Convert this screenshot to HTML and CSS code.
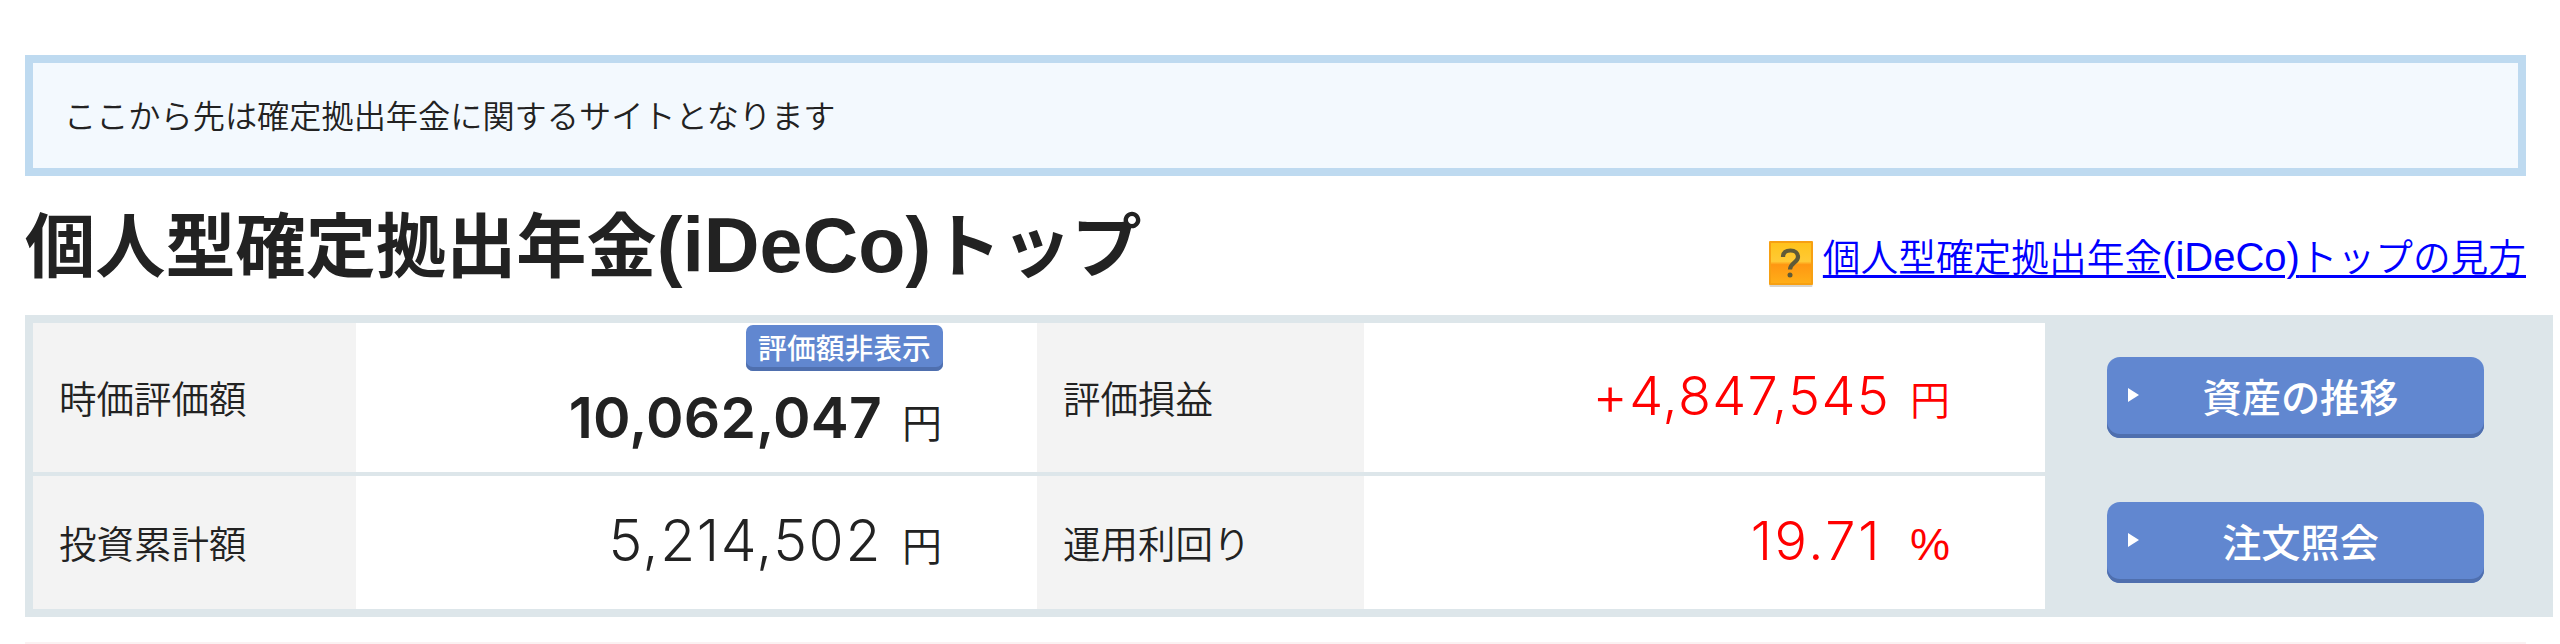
FILE: index.html
```
<!DOCTYPE html>
<html lang="ja">

<head>
    <meta charset="UTF-8">
    <meta name="viewport" content="width=device-width, initial-scale=1.0">
    <title>個人型確定拠出年金(iDeCo)トップ</title>
    <link rel="stylesheet" href="styles.css">
</head>

<body>
    <div class="notice">ここから先は確定拠出年金に関するサイトとなります</div>

    <div class="page-header">
        <h1>個人型確定拠出年金<span class="latin">(iDeCo)</span>トップ</h1>
        <div class="help">
            <svg class="help-icon" width="44" height="46" viewBox="0 0 44 46">
                <defs>
                    <linearGradient id="orange" x1="0" y1="0" x2="0" y2="1">
                        <stop offset="0" stop-color="#ffc21c" />
                        <stop offset="0.46" stop-color="#ffca35" />
                        <stop offset="0.54" stop-color="#ff9712" />
                        <stop offset="1" stop-color="#ffae18" />
                    </linearGradient>
                </defs>
                <rect x="0.5" y="2" width="43" height="44" rx="1" fill="#d8d4cc" />
                <rect x="0" y="0" width="44" height="44" rx="1" fill="#f7a012" />
                <rect x="2" y="2" width="40" height="40" fill="url(#orange)" />
                <path d="M14 16 C14 11 17 9.500 21.500 9.500 C26 9.500 29 12 29 16 C29 21.500 21 22 21 28.500" fill="none" stroke="#5f5a38" stroke-width="4.200" />
                <circle cx="21" cy="34" r="2.500" fill="#5f5a38" />
            </svg>
            <a href="#">個人型確定拠出年金<span class="latin">(iDeCo)</span>トップの見方</a>
        </div>
    </div>

    <table class="summary">
        <tr class="row-top">
            <th>時価評価額</th>
            <td class="market-value">
                <button class="btn-small">評価額非表示</button>
                <div class="amount strong"><span class="num">10,062,047</span><span class="unit">円</span></div>
            </td>
            <th>評価損益</th>
            <td>
                <div class="amount plus"><span class="num">+4,847,545</span><span class="unit">円</span></div>
            </td>
            <td class="action"><button class="btn">資産の推移</button></td>
        </tr>
        <tr class="row-bottom">
            <th>投資累計額</th>
            <td>
                <div class="amount"><span class="num">5,214,502</span><span class="unit">円</span></div>
            </td>
            <th>運用利回り</th>
            <td>
                <div class="amount plus rate"><span class="num">19.71</span><span class="unit">%</span></div>
            </td>
            <td class="action"><button class="btn">注文照会</button></td>
        </tr>
    </table>

    <hr>
</body>

</html>
```
FILE: styles.css
```
:root {
    --text-color: #222;
    --frame-color: #dde6ea;
    --btn-bg: #6187d0;
    --btn-edge: #4f6fae;
}

* {
    box-sizing: border-box;
}

body {
    margin: 0;
    padding: 55px 0 0 25px;
    height: 644px;
    overflow: hidden;
    background-color: #fff;
    color: var(--text-color);
    font-family: "Noto Sans CJK JP", sans-serif;
}

.notice {
    width: 2501px;
    height: 121px;
    padding: 0 31px;
    border: 8px solid #bedaf0;
    background-color: #f3f9fe;
    font-size: 32.2px;
    font-weight: 350;
    line-height: 102px;
}

/* Heading and help link */
.page-header {
    display: flex;
    justify-content: space-between;
    width: 2501px;
    height: 139px;
}

h1 {
    margin: 0;
    font-size: 70.2px;
    font-weight: 700;
    line-height: 132px;
    white-space: nowrap;
}

.latin {
    font-family: "Liberation Sans", sans-serif;
    font-size: 1.1em;
    line-height: 1;
}

.help {
    display: flex;
    padding-top: 65px;
    font-size: 37.7px;
    line-height: 28px;
    white-space: nowrap;
}

.help-icon {
    margin-right: 10px;
}

.help a {
    color: #00f;
    font-weight: 350;
    text-decoration-thickness: 3px;
    text-underline-offset: 4px;
}

.help .latin {
    font-size: 40px;
    line-height: 28px;
}

/* Summary table */
.summary {
    width: 2528px;
    border: 8px solid var(--frame-color);
    border-collapse: separate;
    border-spacing: 0;
    table-layout: fixed;
    background-color: var(--frame-color);
}

th,
td {
    padding: 0;
}

th {
    width: 327px;
    padding: 0 0 2px 26px;
    background-color: #f3f3f3;
    font-size: 37.5px;
    font-weight: 350;
    line-height: 50px;
    text-align: left;
}

th:first-child {
    width: 323px;
}

td {
    width: 681px;
    padding: 0 96px 3px 0;
    background-color: #fff;
    text-align: right;
}

.row-top > * {
    height: 153px;
    border-bottom: 4px solid var(--frame-color);
}

.row-bottom > * {
    height: 133px;
}

.market-value {
    padding-top: 2px;
    vertical-align: top;
}

.amount {
    display: flex;
    justify-content: flex-end;
    align-items: baseline;
    height: 60px;
    line-height: 60px;
}

.num {
    font-family: Inter, sans-serif;
    font-size: 57px;
    font-weight: 300;
    letter-spacing: 1.6px;
}

.strong .num {
    font-weight: 600;
    letter-spacing: 0.2px;
}

.unit {
    width: 39px;
    margin-left: 20px;
    padding-bottom: 2px;
    font-size: 40px;
    font-weight: 350;
    line-height: 1;
}

.plus {
    color: #f00;
}

.plus .num {
    font-size: 54px;
    letter-spacing: 1.3px;
}

.rate .num {
    letter-spacing: 2.6px;
}

.rate .unit {
    margin-left: 28px;
    font-family: "Liberation Sans", sans-serif;
    font-size: 45px;
}

.action {
    width: 500px;
    padding: 0 0 0 62px;
    background-color: var(--frame-color);
    text-align: left;
}

/* Buttons */
button {
    border: none;
    background-color: var(--btn-bg);
    color: #fff;
    font-family: inherit;
    cursor: pointer;
}

.btn {
    display: flex;
    align-items: center;
    justify-content: center;
    width: 377px;
    height: 81px;
    padding: 0 3px 5px 21px;
    border-radius: 13px;
    box-shadow: inset 0 -4px 0 var(--btn-edge);
    font-size: 39.2px;
    font-weight: 500;
    text-indent: -19px;
}

.btn::before {
    content: "";
    margin-right: auto;
    border-left: 11px solid #fff;
    border-top: 7px solid transparent;
    border-bottom: 7px solid transparent;
}

.btn::after {
    content: "";
    margin-left: auto;
}

.btn-small {
    display: block;
    width: 197px;
    height: 46px;
    margin: 0 -2px 17px auto;
    padding: 0 0 2px;
    border-radius: 7px;
    box-shadow: inset 0 -4px 0 var(--btn-edge);
    font-size: 28.8px;
    font-weight: 500;
    line-height: 42px;
}

hr {
    width: 2501px;
    height: 2px;
    margin: 25px 0 0;
    border: none;
    background-color: #fbf1f2;
}
```
